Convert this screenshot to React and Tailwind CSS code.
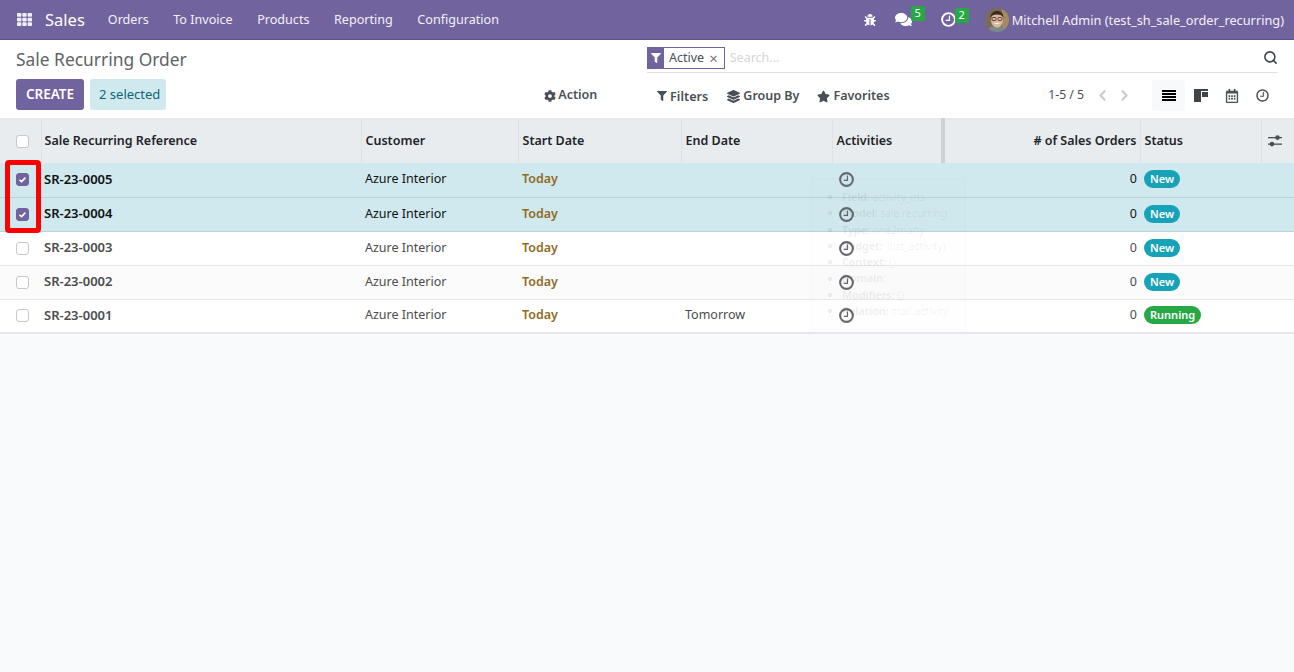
import { FaBug, FaCog, FaComments, FaFilter, FaLayerGroup, FaRegCalendarAlt, FaStar, FaTh } from "react-icons/fa";
import { FiChevronLeft, FiChevronRight, FiSearch } from "react-icons/fi";

const menu = ["Orders", "To Invoice", "Products", "Reporting", "Configuration"];

const rows = [
  { ref: "SR-23-0005", end: "", status: "New", selected: true },
  { ref: "SR-23-0004", end: "", status: "New", selected: true },
  { ref: "SR-23-0003", end: "", status: "New" },
  { ref: "SR-23-0002", end: "", status: "New", hover: true },
  { ref: "SR-23-0001", end: "Tomorrow", status: "Running" },
];

const tooltipLines = [
  ["Field:", "activity_ids"],
  ["Model:", "sale.recurring"],
  ["Type:", "one2many"],
  ["Widget:", " (list_activity)"],
  ["Context:", "{}"],
  ["Domain:", ""],
  ["Modifiers:", "{}"],
  ["Relation:", "mail.activity"],
];

const Checkbox = ({ checked }) => (
  <span className={`flex h-[13px] w-[13px] items-center justify-center rounded-[3px] border ${checked ? "border-[#71639e] bg-[#71639e]" : "border-[#c4c8cc] bg-white"}`}>
    {checked && (
      <svg width="9" height="9" viewBox="0 0 9 9" fill="none" stroke="white" strokeWidth="1.6">
        <path d="M1.5 4.8 3.6 6.6 7.4 2.6" />
      </svg>
    )}
  </span>
);

const Clock = ({ size = 15, width = 2 }) => (
  <svg width={size} height={size} viewBox="0 0 16 16" fill="none" stroke="currentColor" strokeWidth={width}>
    <circle cx="8" cy="8" r="6.8" />
    <path d="M9 3.800V9H5" strokeWidth="1.300" />
  </svg>
);

const Avatar = () => (
  <svg width="24" height="24" viewBox="0 0 24 24" className="rounded-full">
    <rect width="24" height="24" fill="#7d6a55" />
    <rect x="17" width="7" height="24" fill="#a58a63" />
    <path d="M2 24c1-5 5-6 10-6s9 1 10 6z" fill="#7c8a88" />
    <ellipse cx="12" cy="12" rx="6" ry="7.500" fill="#dcb79c" />
    <path d="M5.500 10c0-5 3-7 6.500-7s6.500 2 6.500 7c-1-2.500-3-3.500-6.500-3.500S6.500 7.500 5.500 10z" fill="#3a2a20" />
    <rect x="7" y="9.500" width="4" height="3" rx="1" fill="none" stroke="#3a2d26" strokeWidth=".8" />
    <rect x="13" y="9.500" width="4" height="3" rx="1" fill="none" stroke="#3a2d26" strokeWidth=".8" />
    <path d="M9 15c2 1.500 4 1.500 6 0z" fill="#fff" />
  </svg>
);

const Kanban = () => (
  <svg width="14" height="13" viewBox="0 0 14 13">
    <rect x="0" y="0" width="14" height="2" fill="#3f444a" />
    <rect x="0" y="2" width="7" height="11" fill="#3f444a" />
    <rect x="8" y="3" width="6" height="5" fill="#3f444a" />
  </svg>
);

const ListIcon = () => (
  <div className="flex w-[14px] flex-col gap-[1px]">
    <span className="h-[2px] bg-black" />
    <span className="h-[2px] bg-black" />
    <span className="h-[2px] bg-black" />
    <span className="h-[2px] bg-black" />
  </div>
);

const Sliders = () => (
  <svg width="14" height="12" viewBox="0 0 14 12" fill="currentColor">
    <rect y="2" width="14" height="1.300" />
    <rect y="8.500" width="14" height="1.300" />
    <circle cx="9.500" cy="2.600" r="2.300" />
    <circle cx="4" cy="9.100" r="2.300" />
  </svg>
);

const Badge = ({ count, className }) => (
  <span className={`absolute h-[15px] w-[14px] rounded-[2px] bg-[#28a745] text-center text-[11px] leading-[14px] text-white ${className}`}>{count}</span>
);

const Th = ({ children, className = "" }) => (
  <th className={`border-r border-[#dee2e6] pb-[1px] pl-[4px] pr-[3px] text-left text-[12.5px] font-semibold text-[#212529] ${className}`}>{children}</th>
);

export default function App() {
  return (
    <div className="flex min-h-[672px] flex-col bg-[#f9fafb] font-['Noto_Sans','Open_Sans',sans-serif] text-[12.5px] text-[#4c4c4c]">
      {/* Top navbar */}
      <nav className="flex h-10 items-center border-b border-[#5f5387] bg-[#71639e] pl-[17px] pr-[10px] text-white">
        <FaTh size={15} className="text-[#f0eef6]" />
        <span className="ml-[13px] pt-[1px] text-[16.5px]">Sales</span>
        <div className="ml-[23px] flex gap-[24.500px] pt-[2px] text-[12.6px] text-[#f3f1f8]">
          {menu.map((item) => (
            <span key={item}>{item}</span>
          ))}
        </div>
        <div className="ml-auto flex items-center">
          <FaBug size={12} />
          <span className="relative ml-[19px]">
            <FaComments size={17} />
            <Badge count="5" className="-top-[5px] left-[16px]" />
          </span>
          <span className="relative ml-[29px]">
            <Clock size={15} />
            <Badge count="2" className="-top-[4px] left-[14px]" />
          </span>
          <span className="ml-[29px]">
            <Avatar />
          </span>
          <span className="ml-[3px] pt-[2px] text-[12.75px] text-[#f3f1f8]">Mitchell Admin (test_sh_sale_order_recurring)</span>
        </div>
      </nav>

      {/* Control panel */}
      <div className="flex h-[78px] justify-between bg-white pl-4 pr-[16px]">
        <div className="w-[631px] shrink-0">
          <div className="mt-[6px] text-[17.4px] leading-[26px] text-[#5f6368]">Sale Recurring Order</div>
          <div className="mt-[7px] flex items-center">
            <button className="h-[31px] w-[68px] rounded-[3px] bg-[#71639e] text-[13.5px] font-semibold text-white">CREATE</button>
            <span className="ml-[6px] flex h-[31px] items-center rounded-[3px] bg-[#d0e9ee] pl-[9px] pr-[6px] text-[13px] text-[#0c6674]">2 selected</span>
            <span className="ml-[378px] flex items-center gap-[2px] pt-[2px] font-semibold text-[#4a4f55]">
              <FaCog size={12} /> Action
            </span>
          </div>
        </div>
        <div className="flex-1">
          <div className="mt-[6px] flex h-[27px] items-center border-b border-[#dee2e6] pb-[2px]">
            <span className="flex h-[22px] items-center border border-[#71639e] pr-[6px]">
              <span className="flex h-full w-[16px] items-center justify-center bg-[#71639e] text-white">
                <FaFilter size={10} />
              </span>
              <span className="ml-[5px] text-[#4a4f55]">Active</span>
              <span className="ml-[5px] text-[15px] leading-none text-[#777]">×</span>
            </span>
            <span className="ml-[5px] text-[#d5d7da]">Search...</span>
            <FiSearch size={15} strokeWidth={2.5} className="-mt-[2px] ml-auto text-[#3f444a]" />
          </div>
          <div className="mt-[7px] flex h-[31px] items-center">
            <div className="ml-[10px] flex items-center pt-[2px] font-semibold text-[#4a4f55]">
              <span className="flex items-center gap-[3px] text-[12.7px]"><FaFilter size={10} /> Filters</span>
              <span className="ml-[19px] flex items-center gap-[3px]"><FaLayerGroup size={13} /> Group By</span>
              <span className="ml-[18px] flex items-center gap-[3px]"><FaStar size={13} /> Favorites</span>
            </div>
            <span className="ml-auto text-[12.2px] text-[#4a4f55]">1-5 / 5</span>
            <span className="ml-[10px] flex items-center gap-[5px] text-[#c9ccd0]">
              <FiChevronLeft size={17} strokeWidth={3} />
              <FiChevronRight size={17} strokeWidth={3} />
            </span>
            <div className="ml-[19px] flex h-[31px] items-center text-[#4a4f55]">
              <span className="flex h-full w-[33px] items-center justify-center rounded-[3px] bg-[#f8f9fa]"><ListIcon /></span>
              <span className="flex w-[32px] justify-center"><Kanban /></span>
              <span className="flex w-[30px] justify-center"><FaRegCalendarAlt size={14} /></span>
              <span className="flex w-[31px] justify-center"><Clock size={13} width={1.800} /></span>
            </div>
          </div>
        </div>
      </div>

      {/* List */}
      <div className="relative">
        <table className="w-full table-fixed border-collapse border-y-2 border-[#e5e7ea] bg-white">
          <colgroup>
            <col className="w-[41px]" />
            <col className="w-[320px]" />
            <col className="w-[157px]" />
            <col className="w-[163px]" />
            <col className="w-[151px]" />
            <col className="w-[111px]" />
            <col className="w-[197px]" />
            <col className="w-[121px]" />
            <col className="w-[33px]" />
          </colgroup>
          <thead>
            <tr className="h-[44px] bg-[#e9ecef]">
              <th className="border-r border-[#dee2e6]">
                <span className="flex justify-center pb-[1px] pl-[4px]"><Checkbox /></span>
              </th>
              <Th className="!pl-[3px]">Sale Recurring Reference</Th>
              <Th>Customer</Th>
              <Th>Start Date</Th>
              <Th>End Date</Th>
              <Th className="border-r-4 border-r-[#cdd0d4]">Activities</Th>
              <Th className="!text-right">
                # of Sales Orders
              </Th>
              <Th>Status</Th>
              <th className="text-[#4a4f55]">
                <span className="flex justify-center pb-[1px] pr-[6px]"><Sliders /></span>
              </th>
            </tr>
          </thead>
          <tbody>
            {rows.map((row) => (
              <tr
                key={row.ref}
                className={`h-[34px] border-b ${row.selected ? "border-[#b9d3da] bg-[#d0e9ee] text-[#111]" : row.hover ? "border-[#e5e7ea] bg-[#fbfbfb]" : "border-[#e5e7ea] bg-white"}`}
              >
                <td>
                  <span className="flex justify-center pl-[4px]"><Checkbox checked={row.selected} /></span>
                </td>
                <td className="px-[3px] text-[13px] font-semibold">{row.ref}</td>
                <td className="px-[4px]">Azure Interior</td>
                <td className="px-[4px] font-semibold text-[#8f6b1f]">Today</td>
                <td className="px-[4px]">{row.end}</td>
                <td className="pl-[7px]">
                  <span className="block w-[15px] text-[#666a6f]"><Clock size={15} width={2.2} /></span>
                </td>
                <td className="px-[3px] text-right">0</td>
                <td className="px-[4px]">
                  <span className={`inline-block rounded-full px-[6px] text-[11px] font-semibold leading-[18px] text-white ${row.status === "New" ? "bg-[#17a2b8]" : "bg-[#28a745]"}`}>
                    {row.status}
                  </span>
                </td>
                <td />
              </tr>
            ))}
          </tbody>
        </table>

        {/* Fading field tooltip left over the rows */}
        <div className="pointer-events-none absolute left-[811px] top-[60px] h-[152px] w-[155px] rounded-[3px] border border-black/[0.02] bg-black/[0.005] pl-[16px] pt-[10px] text-[11px] leading-[16.300px] tracking-[-0.3px] text-black/[0.07]">
          {tooltipLines.map(([label, value]) => (
            <div key={label} className="flex items-center gap-[10px] whitespace-pre">
              <span className="h-[4px] w-[4px] rounded-full border border-black/[0.1]" />
              <span><b>{label}</b> {value}</span>
            </div>
          ))}
        </div>

        {/* Highlight drawn on the screenshot */}
        <div className="pointer-events-none absolute left-[5px] top-[42px] h-[73px] w-[36px] rounded-[4px] border-[5px] border-[#ff0000]" />
      </div>
    </div>
  );
}
